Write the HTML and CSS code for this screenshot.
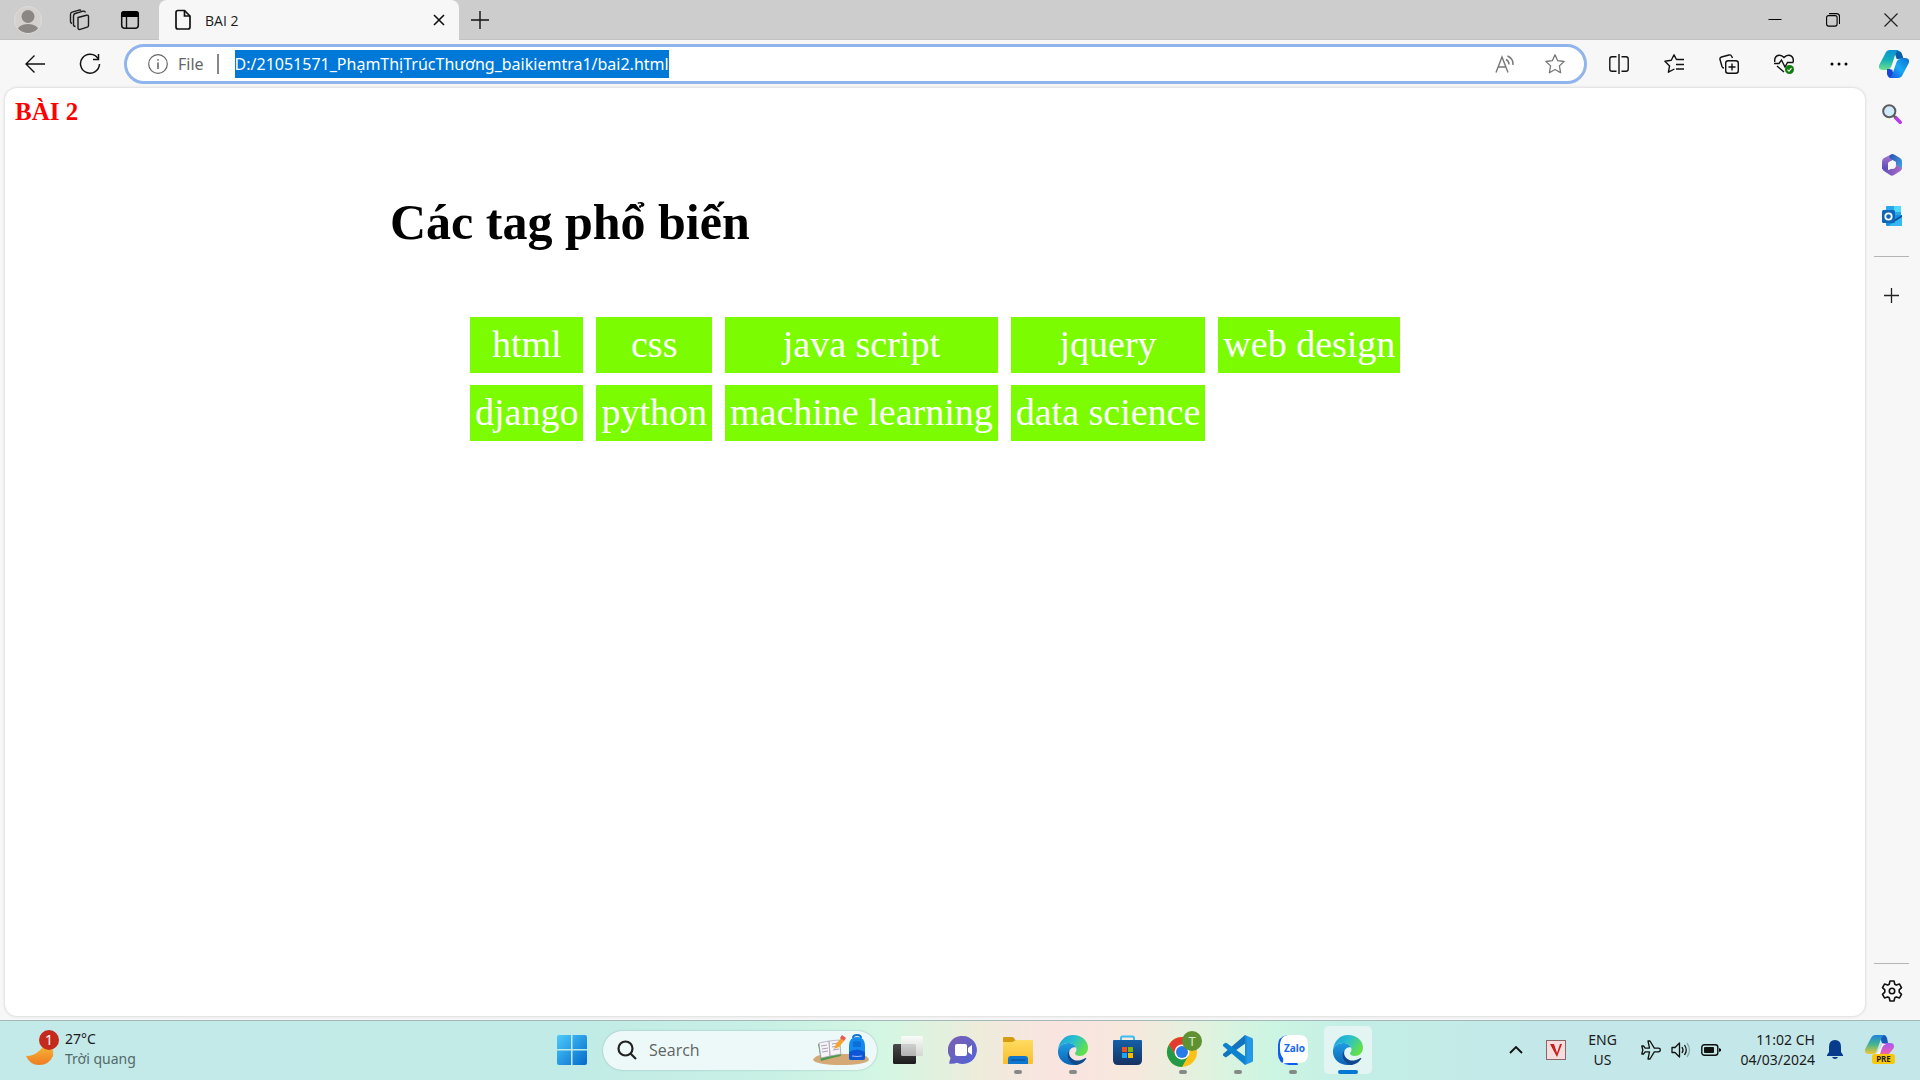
FILE: index.html
```html
<!DOCTYPE html>
<html lang="vi">
<head>
<meta charset="utf-8">
<meta name="viewport" content="width=device-width, initial-scale=1">
<title>BAI 2</title>
<link rel="stylesheet" href="styles.css">
</head>
<body>
<svg class="defs" aria-hidden="true">
  <defs>
    <linearGradient id="edgeTop" x1="0" y1="0" x2="1" y2="0.5"><stop offset="0" stop-color="#1c9bdc"/><stop offset=".5" stop-color="#28bfd0"/><stop offset="1" stop-color="#62e04c"/></linearGradient>
    <linearGradient id="edgeMid" x1="0" y1="0" x2="0" y2="1"><stop offset="0" stop-color="#1f9de0"/><stop offset="1" stop-color="#0b63b8"/></linearGradient>
    <linearGradient id="winBlue" x1="0" y1="0" x2="1" y2="1"><stop offset="0" stop-color="#4ccbfb"/><stop offset="1" stop-color="#0469cc"/></linearGradient>
    <linearGradient id="copA" x1="0" y1="0" x2="0" y2="1"><stop offset="0" stop-color="#0a93d6"/><stop offset=".5" stop-color="#16b0b8"/><stop offset="1" stop-color="#6fe08a"/></linearGradient>
    <linearGradient id="copB" x1="1" y1="0" x2="0" y2="1"><stop offset="0" stop-color="#0a6fd0"/><stop offset=".5" stop-color="#1aa9f5"/><stop offset="1" stop-color="#1650e0"/></linearGradient>
    <linearGradient id="preA" x1="0" y1="0" x2="0" y2="1"><stop offset="0" stop-color="#1e84e0"/><stop offset=".5" stop-color="#45b58e"/><stop offset="1" stop-color="#f5c72e"/></linearGradient>
    <linearGradient id="preB" x1="0" y1="0" x2="0" y2="1"><stop offset="0" stop-color="#a35cf0"/><stop offset=".5" stop-color="#e05bc0"/><stop offset="1" stop-color="#ff8a4c"/></linearGradient>
    <linearGradient id="folder" x1="0" y1="0" x2="0" y2="1"><stop offset="0" stop-color="#ffdc62"/><stop offset="1" stop-color="#f9bd2b"/></linearGradient>
    <linearGradient id="chat" x1="0" y1="0" x2="1" y2="1"><stop offset="0" stop-color="#7b5fb0"/><stop offset="1" stop-color="#5064d8"/></linearGradient>
    <linearGradient id="store" x1="0" y1="0" x2="0" y2="1"><stop offset="0" stop-color="#1460a8"/><stop offset="1" stop-color="#173263"/></linearGradient>
    <linearGradient id="moon" x1="0" y1="0" x2="0" y2="1"><stop offset="0" stop-color="#f8bf3a"/><stop offset="1" stop-color="#ee7d23"/></linearGradient>
    <linearGradient id="glass" x1="0" y1="0" x2="0" y2="1"><stop offset="0" stop-color="#fff"/><stop offset="1" stop-color="#d0d0d0"/></linearGradient>
    <linearGradient id="dark" x1="0" y1="0" x2="0" y2="1"><stop offset="0" stop-color="#4a4a4a"/><stop offset="1" stop-color="#1c1c1c"/></linearGradient>
    <linearGradient id="officeA" x1="0" y1="0" x2="0" y2="1"><stop offset="0" stop-color="#b07ad4"/><stop offset="1" stop-color="#4b45b0"/></linearGradient>
    <linearGradient id="officeB" x1="0" y1="0" x2="1" y2="1"><stop offset="0" stop-color="#2a4faf"/><stop offset="1" stop-color="#44a5ea"/></linearGradient>
    <linearGradient id="officeC" x1="0" y1="0" x2="1" y2="0"><stop offset="0" stop-color="#5a50b8"/><stop offset="1" stop-color="#b06ac8"/></linearGradient>
    <symbol id="edge" viewBox="0 0 30 30">
      <path d="M0 15C1 6 7 0 15 0c9 0 15 6 15 12.500C30 18 26 21 22 21c-3 0-5-1-5-2.500 0-1 1.500-1.500 1.500-4C18.500 11 15 8 10 8 5 8 1 11 0 15z" fill="url(#edgeTop)"/>
      <path d="M0 15C1 11 5 8 10 8c4 0 7 2 8 4.500-2-1-5 0-6.500 3C9 20 12 26 18 29.700 7 31.500-1 24 0 15z" fill="url(#edgeMid)"/>
      <path d="M11.500 15.500C9.500 21 15 26.500 21 25.500c3-.500 5.500-1.800 6.500-2.500.500-.300 1 .200.700.700C26 27.500 21.500 30 17.500 30 11 28 7 20 11.500 15.500z" fill="#10498c"/>
    </symbol>
  </defs>
</svg>

<header class="titlebar">
  <div class="titlebar-tools">
    <button class="icon-btn" aria-label="Profile"><svg width="28" height="28" viewBox="0 0 28 28"><defs><clipPath id="av"><circle cx="14" cy="14" r="13"/></clipPath></defs><circle cx="14" cy="14" r="13.500" fill="#d4d1ce" stroke="#dedcda"/><circle cx="14" cy="10.500" r="6.500" fill="#8b8784"/><ellipse cx="14" cy="25" rx="11" ry="7" fill="#8b8784" clip-path="url(#av)"/></svg></button>
    <button class="icon-btn" aria-label="Workspaces"><svg width="22" height="22" viewBox="0 0 22 22" fill="none" stroke="#1a1a1a" stroke-width="1.400"><path d="M10 8.500l8.500-2.300q2-.4 2 1.600v8.700q0 1.300-1.300 1.700l-7 2.200q-2.200.6-2.200-1.600z"/><path d="M7.500 17.500q-2 0-2-2V7q0-2 1.600-2.500l8-2.300q2-.4 2.300 1.300"/><path d="M4 14.500q-1.500-.5-1.500-2V5.500q0-2 1.500-2.400l7-2q1.500-.4 2 .5"/></svg></button>
    <button class="icon-btn" aria-label="Tab actions"><svg width="20" height="20" viewBox="0 0 20 20"><rect x="1.700" y="1.700" width="16.600" height="16.600" rx="3" fill="none" stroke="#111" stroke-width="1.500"/><path d="M1 7V4q0-3 3-3h12q3 0 3 3v3z" fill="#000"/><path d="M6.500 7v11" stroke="#111" stroke-width="1.400"/></svg></button>
  </div>
  <div class="tab">
    <svg width="18" height="22" viewBox="0 0 18 22" fill="none" stroke="#111" stroke-width="1.700"><path d="M4 1.500h6.500L16 7v11q0 2-2 2H4q-2 0-2-2V3.500q0-2 2-2z"/><path d="M10.500 1.500V7H16"/></svg>
    <span class="tab-title">BAI 2</span>
    <button class="icon-btn small" aria-label="Close tab"><svg width="12" height="12" viewBox="0 0 12 12" stroke="#111" stroke-width="1.600"><path d="M1 1l10 10M11 1L1 11"/></svg></button>
  </div>
  <button class="icon-btn new-tab" aria-label="New tab"><svg width="18" height="18" viewBox="0 0 18 18" stroke="#111" stroke-width="1.400"><path d="M9 0v18M0 9h18"/></svg></button>
  <div class="window-controls">
    <button class="icon-btn wide" aria-label="Minimize"><svg width="14" height="14" viewBox="0 0 14 14" stroke="#000"><path d="M.5 6.500h13"/></svg></button>
    <button class="icon-btn wide" aria-label="Restore"><svg width="14" height="14" viewBox="0 0 14 14" fill="none" stroke="#000" stroke-width="1.100"><rect x=".6" y="2.600" width="10.500" height="10.500" rx="2"/><path d="M3 .6h7.500q3 0 3 3V11"/></svg></button>
    <button class="icon-btn wide" aria-label="Close"><svg width="14" height="14" viewBox="0 0 14 14" stroke="#222" stroke-width="1.200"><path d="M.5.500l13 13M13.500.500l-13 13"/></svg></button>
  </div>
</header>

<nav class="toolbar" aria-label="Browser toolbar">
  <button class="icon-btn nav" aria-label="Back"><svg width="20" height="18" viewBox="0 0 20 18" fill="none" stroke="#111" stroke-width="1.400"><path d="M20 9H1M9.500.500L1 9l8.500 8.500"/></svg></button>
  <button class="icon-btn nav" aria-label="Refresh"><svg width="22" height="22" viewBox="0 0 22 22" fill="none" stroke="#111" stroke-width="1.500"><path d="M19 5.500A9.500 9.500 0 1 0 20.500 11"/><path d="M19.500 1v5.500H14"/></svg></button>
  <div class="address">
    <svg width="20" height="20" viewBox="0 0 20 20" fill="none" stroke="#666" stroke-width="1.200"><circle cx="10" cy="10" r="9.300"/><path d="M10 8.500V15" stroke-width="1.600"/><circle cx="10" cy="5.800" r=".9" fill="#666" stroke="none"/></svg>
    <label class="scheme" for="url">File</label>
    <input id="url" class="url" type="text" value="D:/21051571_PhạmThịTrúcThương_baikiemtra1/bai2.html">
    <div class="address-actions">
      <button class="icon-btn nav" aria-label="Read aloud"><svg width="20" height="18" viewBox="0 0 20 18" fill="none" stroke="#777" stroke-width="1.400"><path d="M1 17.500L7 2l6 15.500M3 12h8"/><path d="M11 4.500q3 1.500 3 5M12.500 1q6 2.500 5.500 9"/></svg></button>
      <button class="icon-btn nav" aria-label="Add to favorites"><svg width="20" height="20" viewBox="0 0 20 20" fill="none" stroke="#777" stroke-width="1.300" stroke-linejoin="round"><path d="M10 .8l2.700 5.900 6.400.8-4.700 4.400 1.200 6.800L10 15.500l-5.600 3.200 1.200-6.800L.9 7.500l6.400-.8z"/></svg></button>
    </div>
  </div>
  <div class="toolbar-actions">
    <button class="icon-btn" aria-label="Split screen"><svg width="20" height="20" viewBox="0 0 20 20" fill="none" stroke="#111" stroke-width="1.400"><path d="M7.500 2.700H3q-2.200 0-2.200 2.200v10.200q0 2.200 2.200 2.200h4.500M12.500 2.700H17q2.200 0 2.200 2.200v10.200q0 2.200-2.200 2.200h-4.500M10 0v20"/></svg></button>
    <button class="icon-btn" aria-label="Favorites"><svg width="20" height="20" viewBox="0 0 20 20" fill="none" stroke="#111" stroke-width="1.400" stroke-linejoin="round"><path d="M15 5.500h-2.500L10 .8 7.300 6.300.9 7.200l4.700 4.700-1.200 6.300 6-3.200M13.500 5.500H20M12 10.500h8M12 15h8"/></svg></button>
    <button class="icon-btn" aria-label="Collections"><svg width="20" height="20" viewBox="0 0 20 20" fill="none" stroke="#111" stroke-width="1.400"><rect x="6.700" y="6.700" width="12.600" height="12.600" rx="2.500"/><path d="M13 9.500v7M9.500 13h7M13.500 4l-1-2Q12 .5 10 1L2.500 3Q.5 3.700 1 5.500l2 7q.5 1.500 2 1.500"/></svg></button>
    <button class="icon-btn" aria-label="Browser essentials"><svg width="20" height="20" viewBox="0 0 20 20" fill="none" stroke="#111" stroke-width="1.400"><path d="M.8 8Q0 2 5 1.200q3-.2 5 2.300Q12 1 15 1.200 20 2 19.200 8M0 9.500h5L7.500 6l3.500 7 2.500-4.500h6M3 12l7 6"/><circle cx="15.500" cy="15.500" r="4.500" fill="#107c10" stroke="none"/><path d="M13.500 15.700l1.500 1.400 2.500-3" stroke="#fff" stroke-width="1.100"/></svg></button>
    <button class="icon-btn" aria-label="Settings and more"><svg width="18" height="4" viewBox="0 0 18 4"><circle cx="2" cy="2" r="1.500"/><circle cx="9" cy="2" r="1.500"/><circle cx="16" cy="2" r="1.500"/></svg></button>
    <button class="icon-btn" aria-label="Copilot"><svg width="30" height="28" viewBox="0 0 30 28"><path d="M15 1h4q3 0 4 3l2 6h-7z" fill="#0a5ea8"/><path d="M6 4Q7.500 0 11 0h9q-2.500 1-3.500 4l-4 12q-1.500 4-5 4H4q-5 0-3.800-5z" fill="url(#copA)"/><path d="M8 19h5l2 7q1 2 2 2h-5q-3 0-4-4z" fill="#1747d8"/><path d="M24 24q-1.500 4-5 4h-9q2.500-1 3.500-4l4-12q1.500-4 5-4H26q5 0 3.800 5z" fill="url(#copB)"/><path d="M17 9h4q-3 .5-4 3l-2 6q-1 2-4 2 2-1 3-4z" fill="#f7f7f7"/></svg></button>
  </div>
</nav>

<div class="workspace">
  <main class="page">
    <h2 class="page-title">BÀI 2</h2>
    <section class="popular">
      <h1 class="popular-title">Các tag phổ biến</h1>
      <ul class="tags">
        <li>html</li><li>css</li><li>java script</li><li>jquery</li><li>web design</li>
        <li>django</li><li>python</li><li>machine learning</li><li>data science</li>
      </ul>
    </section>
  </main>
  <aside class="sidebar">
    <button class="icon-btn side" aria-label="Search"><svg width="20" height="20" viewBox="0 0 22 22"><path d="M15 15l5 5" stroke="#b43bf0" stroke-width="4" stroke-linecap="round"/><path d="M12 12l3 3" stroke="#666" stroke-width="2.500"/><circle cx="8" cy="8" r="6.700" fill="#cfeafb" stroke="#5c5c5c" stroke-width="2.200"/></svg></button>
    <button class="icon-btn side" aria-label="Microsoft 365"><svg width="20" height="22" viewBox="0 0 20 22"><path d="M10 0L2 4Q0 5 0 7.500V14.500l6 3V9l6-4z" fill="url(#officeA)"/><path d="M10 0q1.500 0 3 1l5 3q2 1 2 3.500V15l-6-4V8L8 4.500 7 2z" fill="url(#officeB)"/><path d="M20 14q0 2-2 3.200l-6 3.800q-2 1.400-4 0l-6-4q-1.500-1-2-3l7 2 7-5 6 3z" fill="url(#officeC)"/><circle cx="10" cy="11" r="4" fill="#f7f7f7"/></svg></button>
    <button class="icon-btn side" aria-label="Outlook"><svg width="20" height="20" viewBox="0 0 20 20"><rect x="4" width="15" height="12" rx="1" fill="#28a8ea"/><path d="M12 0h7v6h-7z" fill="#50d9ff"/><path d="M4 9h16v9.500q0 1.500-1.500 1.500h-13Q4 20 4 18.500z" fill="#1490df"/><path d="M20 9l-8 5 8 6z" fill="#0a4f9c"/><path d="M20 11v9H6z" fill="#35b8f1"/><rect y="4" width="13" height="13" rx="1.500" fill="#0f65b8"/><circle cx="6.500" cy="10.500" r="3.200" fill="none" stroke="#fff" stroke-width="1.800"/></svg></button>
    <hr class="side-rule">
    <button class="icon-btn add" aria-label="Customize"><svg width="15" height="15" viewBox="0 0 15 15" stroke="#222" stroke-width="1.300"><path d="M7.500 0v15M0 7.500h15"/></svg></button>
    <hr class="side-rule bottom">
    <button class="icon-btn side" aria-label="Settings"><svg width="22" height="22" viewBox="0 0 22 22" fill="none" stroke="#111" stroke-width="1.600" stroke-linejoin="round"><path d="M9 1h4l.8 3.200 1.500.9 3.200-1 2 3.500-2.300 2.300v2.200l2.300 2.300-2 3.500-3.200-1-1.500.9L13 21H9l-.8-3.200-1.500-.9-3.200 1-2-3.500 2.300-2.300V9.900L1.500 7.600l2-3.500 3.200 1 1.500-.9z"/><circle cx="11" cy="11" r="2.700"/></svg></button>
  </aside>
</div>

<footer class="taskbar">
  <button class="weather">
    <svg width="34" height="38" viewBox="0 0 34 38"><path d="M19 12q10 6 8 14-4 9-14 9Q4 35 0 26q8 0 13-5 5-4 6-9z" fill="url(#moon)"/><circle cx="23" cy="10" r="10" fill="#c42b1c"/><text x="23" y="15" text-anchor="middle" class="badge-text">1</text></svg>
    <span class="weather-text"><span>27°C</span><span class="muted">Trời quang</span></span>
  </button>

  <div class="apps">
    <button class="app" aria-label="Start"><svg width="30" height="30" viewBox="0 0 30 30" fill="url(#winBlue)"><path d="M2 0h12v14H0V2q0-2 2-2zM15.500 0H28q2 0 2 2v12H15.500zM0 15.500h14V30H2q-2 0-2-2zM15.500 15.500H30V28q0 2-2 2H15.500z"/></svg></button>
    <label class="search">
      <svg width="20" height="20" viewBox="0 0 20 20" fill="none" stroke="#222" stroke-width="2.200"><circle cx="8.500" cy="8.500" r="7"/><path d="M13.500 13.500l5.500 5.500"/></svg>
      <input type="text" placeholder="Search" aria-label="Search">
      <svg width="58" height="32" viewBox="0 0 58 32"><path d="M1 26q2-6 18-6h22q15 0 16 6-4 5-28 5T1 26z" fill="#d5a878"/><path d="M6 10l11-3 11 1 1 14-9 2-11 3z" fill="#4d9a4a"/><path d="M7 9l10-2 1 15-9 2zM17 7l10-1 2 14-11 2z" fill="#f7f4f8" stroke="#a9a0b8" stroke-width=".7"/><path d="M9 12l6-1M10 15l6-1M10 18l6-1M20 10l6-1M20 13l6-1M21 16l6-1" stroke="#a9a0b8"/><path d="M22 15l2-5 5-6 3 3-5 6z" fill="#f7a22b"/><path d="M28 4l2-3 4 3-2 3z" fill="#e95b4e"/><path d="M41 4q0-3 4-3t4 3" fill="none" stroke="#1673d1" stroke-width="2"/><path d="M37 12q0-9 8-9t8 9v12q0 2-2 2H39q-2 0-2-2z" fill="#1389ef"/><path d="M41 8q4-2 8 0v5h-8z" fill="#0c6fd8"/><path d="M37 18q8-5 16 0v6q0 2-2 2H39q-2 0-2-2z" fill="#0b56d4"/><path d="M40 22q5 1 10 0" fill="none" stroke="#a6b8ff"/></svg>
    </label>
    <button class="app" aria-label="Task view"><svg width="30" height="28" viewBox="0 0 30 28"><rect y="8" width="23" height="20" rx="1.500" fill="url(#dark)"/><rect x="8" width="22" height="20" rx="1.500" fill="url(#glass)" opacity=".82"/></svg></button>
    <button class="app" aria-label="Chat"><svg width="30" height="28" viewBox="0 0 30 28"><path d="M15 0a14 14 0 1 1-6 26.700Q5 28.500 1 27.500L2.500 22A14 14 0 0 1 15 0z" fill="url(#chat)"/><rect x="7" y="8" width="12" height="12" rx="2" fill="#fff"/><path d="M20 12l4-3v10l-4-3z" fill="#fff"/></svg></button>
    <button class="app running" aria-label="File Explorer"><svg width="30" height="28" viewBox="0 0 30 28"><path d="M0 2Q0 1 1 1h8q1 0 2 1l2 3h-2L8 9H0z" fill="#d79b10"/><path d="M0 6h10l3-2h17v23q0 1-1 1H1q-1 0-1-1z" fill="url(#folder)"/><path d="M5 28v-5q0-3 3-3h14q3 0 3 3v5z" fill="#0e76cf"/><path d="M8 24h14" stroke="#0a4f96" stroke-width="1.200"/></svg></button>
    <button class="app running" aria-label="Edge"><svg width="30" height="30"><use href="#edge"/></svg></button>
    <button class="app" aria-label="Store"><svg width="30" height="30" viewBox="0 0 30 30"><path d="M8 6V3q0-1.500 1.500-1.500h10Q21 1.500 21 3v3" fill="none" stroke="#37bdf2" stroke-width="2"/><path d="M0 6q0-1 1-1h27q1 0 1 1v19q0 5-5 5H5q-5 0-5-5z" fill="url(#store)"/><path d="M9 12h5v5H9z" fill="#f25022"/><path d="M15 12h5v5h-5z" fill="#7fba00"/><path d="M9 18h5v5H9z" fill="#19a8ef"/><path d="M15 18h5v5h-5z" fill="#ffb900"/></svg></button>
    <button class="app running" aria-label="Chrome"><svg width="38" height="38" viewBox="0 0 38 38"><circle cx="18" cy="21" r="15" fill="#fbc116"/><path d="M5 13.500A15 15 0 0 1 31 13.500H18L11.500 25z" fill="#e33b2e"/><path d="M5 13.500A15 15 0 0 0 18 36l6.500-11.500H11.500z" fill="#229a48"/><circle cx="18" cy="21" r="7.500" fill="#fff"/><circle cx="18" cy="21" r="6" fill="#2a7bea"/><circle cx="28" cy="10" r="10" fill="#5f9132"/><text x="28" y="15" text-anchor="middle" class="profile-text">T</text></svg></button>
    <button class="app running" aria-label="Visual Studio Code"><svg width="30" height="30" viewBox="0 0 30 30"><path d="M22 0l7 3q1 .5 1 1.500v21q0 1-1 1.500l-7 3z" fill="#2499e8"/><path d="M22 0L0 19q-.5.800 0 1.500L2 22q.8.500 1.600 0L23 8z" fill="#1373bd"/><path d="M22 30L0 11q-.5-.8 0-1.500L2 8q.8-.5 1.600 0L23 22z" fill="#0d83d0"/><path d="M22 0v30l2-3V3z" fill="#1c8bd8"/></svg></button>
    <button class="app running" aria-label="Zalo"><svg width="30" height="30" viewBox="0 0 30 30"><path d="M9 0q-9 2-9 10v9q0 10 11 11h9z" fill="#0b5cf0"/><path d="M11 0h10q9 0 9 9v10q0 9-9 9H11q-4 0-7 1 2-3 1-6-3-3-3-9Q1 0 11 0z" fill="#fff"/><text x="16.500" y="17" text-anchor="middle" class="zalo-text">Zalo</text></svg></button>
    <button class="app running active" aria-label="Edge, active window"><svg width="30" height="30"><use href="#edge"/></svg></button>
  </div>

  <div class="tray">
    <button class="icon-btn" aria-label="Show hidden icons"><svg width="14" height="8" viewBox="0 0 14 8" fill="none" stroke="#111" stroke-width="1.800"><path d="M1 7l6-6 6 6"/></svg></button>
    <button class="icon-btn" aria-label="Unikey"><svg width="20" height="20" viewBox="0 0 20 20"><rect x=".5" y=".5" width="19" height="19" fill="#f6dcdc" stroke="#8b6666"/><path d="M4 4h4l3 9 3-9h2l-5 13z" fill="#c81e1e"/></svg></button>
    <button class="lang"><span>ENG</span><span>US</span></button>
    <button class="status" aria-label="Network, volume and battery">
      <svg width="20" height="20" viewBox="0 0 20 20" fill="none" stroke="#111" stroke-width="1.300" stroke-linejoin="round"><path d="M19.300 10q0-1.800-2-1.800h-4L9 1H7l1.500 7.200H4.200L2.500 6H.8l1 4-1 4h1.700l1.700-2.200h4.300L7 19h2l4.300-7.200h4q2 0 2-1.800z"/></svg>
      <svg width="20" height="18" viewBox="0 0 20 18" fill="none" stroke="#111" stroke-width="1.300" stroke-linejoin="round"><path d="M1 6.500h3L8.500 2v14L4 11.500H1zM11 6q2 3 0 6M13.500 4q3.500 5 0 10"/><path d="M16 2q5 7 0 14" stroke="#8aa"/></svg>
      <svg width="20" height="14" viewBox="0 0 20 14"><rect x=".8" y="1.800" width="16" height="10.400" rx="2.500" fill="none" stroke="#111" stroke-width="1.400"/><rect x="3" y="4" width="10" height="6" rx="1" fill="#111"/><path d="M18 5l2 1v2l-2 1z" fill="#111"/></svg>
    </button>
    <button class="clock"><span>11:02 CH</span><span>04/03/2024</span></button>
    <button class="icon-btn bell" aria-label="Notifications"><svg width="16" height="20" viewBox="0 0 16 20" fill="#073b8c"><path d="M8 0q6 0 6 7v5l2 3v1H0v-1l2-3V7q0-7 6-7zM5 17h6q-1 2-3 2t-3-2z"/></svg></button>
    <button class="icon-btn" aria-label="Copilot preview"><svg width="30" height="30" viewBox="0 0 30 30"><path d="M14 0h5q2 0 3 3l1 5h-6z" fill="#155cb8"/><path d="M6 3Q7.500 0 10 0h9q-2 1-3 4l-4 11q-1 4-4 4H4q-5 0-3.800-5z" fill="url(#preA)"/><path d="M20 24H9q3-1 4-4l3-9q1-3 4-3h5q5 0 3.800 5z" fill="url(#preB)"/><path d="M17 9h4q-3 1-4 4l-2 6h-4q2-1 3-4z" fill="#f2f6f6"/><rect x="7" y="19" width="23" height="10" rx="2.500" fill="#f9c80e"/><text x="18.500" y="27" text-anchor="middle" class="pre-text">PRE</text></svg></button>
  </div>
</footer>
</body>
</html>
```
FILE: styles.css
```css
* { box-sizing: border-box; }

body {
  margin: 0;
  min-height: 100vh;
  display: flex;
  flex-direction: column;
  background: #f7f7f7;
  color: #1b1b1b;
  font-family: "Noto Sans", "Open Sans", sans-serif;
  font-size: 14px;
}

button {
  padding: 0;
  border: 0;
  background: none;
  font: inherit;
  color: inherit;
}

svg { display: block; flex: none; }

.defs { position: absolute; width: 0; height: 0; }

.icon-btn {
  display: flex;
  align-items: center;
  justify-content: center;
  width: 40px;
  height: 32px;
}

/* Title bar */
.titlebar {
  display: flex;
  align-items: center;
  height: 40px;
  background: #cdcdcd;
  box-shadow: inset 0 -1px #c4c2c0;
}

.titlebar-tools {
  display: flex;
  gap: 11px;
  padding: 0 9px 0 8px;
}

.tab {
  display: flex;
  align-items: center;
  gap: 13px;
  width: 300px;
  height: 40px;
  padding: 0 10px 0 15px;
  background: #f7f7f7;
  border-radius: 8px 8px 0 0;
}

.tab-title {
  flex: 1;
  font-family: "Open Sans", "Noto Sans", sans-serif;
}

.small { width: 20px; }

.new-tab { width: 42px; }

.window-controls {
  display: flex;
  margin-left: auto;
}

.wide { width: 58px; }

/* Toolbar */
.toolbar {
  display: flex;
  align-items: center;
  height: 48px;
  padding: 0 6px 0 15px;
}

.nav { width: 40px; }

.toolbar > .nav + .nav { margin: 0 14px 0 15px; }

.address {
  flex: 1;
  display: flex;
  align-items: center;
  height: 40px;
  padding: 0 9px 0 21px;
  background: #fff;
  border: 3px solid #90b4ec;
  border-radius: 20px;
}

.scheme {
  margin: 0 16px 0 10px;
  padding-right: 13px;
  border-right: 2px solid #888;
  color: #666;
  font-size: 16px;
  line-height: 20px;
}

.url {
  field-sizing: content;
  height: 28px;
  padding: 0;
  border: 0;
  outline: 0;
  background: #0078d7;
  color: #fff;
  font: 16px/28px "Noto Sans", "Open Sans", sans-serif;
}

.address-actions {
  display: flex;
  gap: 10px;
  margin-left: auto;
}

.toolbar-actions {
  display: flex;
  gap: 15px;
  padding-left: 12px;
}

/* Page and sidebar */
.workspace {
  flex: 1;
  display: flex;
  padding: 0 0 4px 5px;
}

.page {
  flex: 1;
  padding: 10px;
  background: #fff;
  border-radius: 12px;
  box-shadow: 0 0 3px #c4c4c4;
  color: #000;
  font-family: "Liberation Serif", "Times New Roman", serif;
}

.page-title {
  margin: 0;
  color: #f00;
  font-size: 25px;
  line-height: 28px;
}

.popular { padding: 67px 0 0 375px; }

.popular-title {
  margin: 0;
  font-size: 50px;
  line-height: 58px;
}

.tags {
  display: grid;
  grid-template-columns: repeat(5, auto);
  justify-content: start;
  gap: 12px 13px;
  margin: 66px 0 0;
  padding: 0 0 0 80px;
  list-style: none;
  color: #fff;
  font-size: 38px;
  line-height: 44px;
  text-align: center;
}

.tags li {
  padding: 5px 5px 7px;
  background: #7cfc00;
}

.sidebar {
  display: flex;
  flex-direction: column;
  align-items: center;
  width: 55px;
  padding-right: 2px;
}

.side { height: 51px; }

.side-rule {
  width: 35px;
  margin: 15px 0 18px;
  border: 0;
  border-top: 1px solid #b4b4b4;
}

.add { height: 40px; }

.bottom { margin: auto 0 1px; }

/* Taskbar */
.taskbar {
  display: grid;
  grid-template-columns: 1fr auto 1fr;
  align-items: center;
  height: 60px;
  border-top: 1px solid #a3b9b9;
  background: linear-gradient(90deg, #c3e9e9 0%, #c1ebe6 30%, #c9f0e5 40%, #d3f7e3 46%, #eeecdb 51%, #fae4e1 55%, #f6e8dc 59%, #dff3df 63%, #cdf5e2 66%, #c3eee6 71%, #c4e8e9 80%, #c4e7e9 100%);
}

.weather {
  display: flex;
  align-items: center;
  justify-self: start;
  gap: 5px;
  padding: 0 0 4px 26px;
  text-align: left;
}

.weather-text,
.lang,
.clock {
  display: flex;
  flex-direction: column;
  font-size: 14px;
  line-height: 20px;
}

.muted { color: #52696a; }

.badge-text { fill: #fff; font-size: 14px; }

.apps {
  display: flex;
  align-items: center;
  gap: 7px;
  padding-bottom: 1px;
}

.app {
  position: relative;
  display: flex;
  align-items: center;
  justify-content: center;
  width: 48px;
  height: 48px;
  border-radius: 5px;
}

.running::after {
  content: "";
  position: absolute;
  bottom: 0;
  width: 8px;
  height: 4px;
  border-radius: 2px;
  background: #858a87;
}

.active { background: #e2f5f3; }

.active::after { width: 20px; background: #0078d4; }

.search {
  display: flex;
  align-items: center;
  width: 274px;
  height: 39px;
  padding: 0 7px 0 14px;
  border-radius: 20px;
  background: #edf9f8;
  box-shadow: 0 0 2px #8fb5b2;
}

.search input {
  flex: 1;
  min-width: 0;
  padding: 0 0 0 12px;
  border: 0;
  outline: 0;
  background: none;
  font: 16px/20px "Open Sans", "Noto Sans", sans-serif;
}

.search input::placeholder { color: #5d6463; }

.profile-text { fill: #dce8d0; font-size: 13px; }

.zalo-text { fill: #1668f0; font-size: 10px; font-weight: 700; }

.tray {
  display: flex;
  align-items: center;
  justify-self: end;
  padding: 0 20px 2px 0;
}

.lang {
  align-items: center;
  width: 54px;
}

.status {
  display: flex;
  align-items: center;
  gap: 10px;
  width: 82px;
  margin-left: 11px;
}

.clock {
  align-items: flex-end;
  margin-left: 18px;
}

.bell { margin-right: 5px; }

.pre-text { fill: #222; font-size: 8px; font-weight: 700; }
```
